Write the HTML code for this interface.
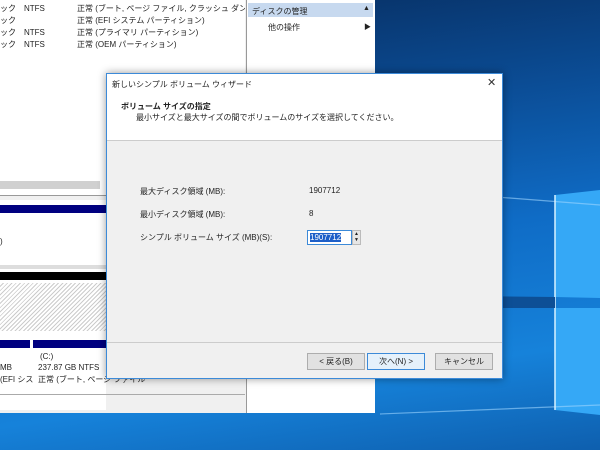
<!DOCTYPE html>
<html><head><meta charset="utf-8"><style>
*{margin:0;padding:0;box-sizing:border-box}
body{width:600px;height:450px;overflow:hidden;position:relative;font-family:"Liberation Sans","Noto Sans CJK JP",sans-serif;font-size:8px;color:#222;background:#0a3f7e}
.a{position:absolute}
.t{position:absolute;white-space:nowrap;font-size:8px}
</style></head><body>
<div class="a" style="left:0;top:0;width:600px;height:450px;background:linear-gradient(172deg,#072a5a 0%,#0b4d96 30%,#0f6cc6 55%,#1682da 80%,#0e5fae 100%)"></div>
<svg class="a" style="left:0;top:0" width="600" height="450">
<polygon points="555,195 600,190 600,298 555,297" fill="#35a8f6"/>
<polygon points="555,308 600,308 600,415 555,410" fill="#35a8f6"/>
<line x1="380" y1="188" x2="600" y2="205" stroke="#9fd6ff" stroke-width="1.2" opacity=".6"/>
<line x1="380" y1="414" x2="600" y2="405" stroke="#9fd6ff" stroke-width="1.2" opacity=".6"/>
<line x1="555" y1="195" x2="555" y2="410" stroke="#d8f2ff" stroke-width="1.5"/>
<polygon points="376,295 555,297 555,308 376,308" fill="#0d4f96"/>
</svg>
<div class="a" style="left:0;top:0;width:375px;height:413px;background:#f0f0f0;border-right:1px solid #888"></div>
<div class="a" style="left:0;top:0;width:245px;height:195px;background:#fff;overflow:hidden">
<div class="t" style="left:0;top:3px">ック　NTFS</div><div class="t" style="left:77px;top:3px">正常 (ブート, ページ ファイル, クラッシュ ダンプ, プライマ</div>
<div class="t" style="left:0;top:15px">ック</div><div class="t" style="left:77px;top:15px">正常 (EFI システム パーティション)</div>
<div class="t" style="left:0;top:27px">ック　NTFS</div><div class="t" style="left:77px;top:27px">正常 (プライマリ パーティション)</div>
<div class="t" style="left:0;top:39px">ック　NTFS</div><div class="t" style="left:77px;top:39px">正常 (OEM パーティション)</div>
<div class="a" style="left:0;top:181px;width:100px;height:8px;background:#d0d0d0"></div>
</div>
<div class="a" style="left:0;top:195px;width:245px;height:1px;background:#999"></div>
<div class="a" style="left:246px;top:0;width:129px;height:413px;background:#fff;border-left:1px solid #999"></div>
<div class="a" style="left:248px;top:3px;width:125px;height:14px;background:#c7d9ef"></div>
<div class="t" style="left:252px;top:6px">ディスクの管理</div><div class="t" style="left:363px;top:5px;font-size:7px">▲</div>
<div class="t" style="left:268px;top:22px">他の操作</div><div class="t" style="left:364px;top:22px;font-size:7px">▶</div>
<div class="a" style="left:0;top:200px;width:106px;height:210px;background:#fff"></div>
<div class="a" style="left:0;top:205px;width:106px;height:8px;background:#000080"></div>
<div class="t" style="left:0;top:237px">)</div>
<div class="a" style="left:0;top:265px;width:106px;height:4px;background:#ddd"></div>
<div class="a" style="left:0;top:272px;width:106px;height:8px;background:#000"></div>
<div class="a" style="left:0;top:283px;width:106px;height:48px;background:repeating-linear-gradient(135deg,#fff 0 2px,#ccc 2px 3px)"></div>
<div class="a" style="left:0;top:340px;width:30px;height:8px;background:#000080"></div>
<div class="a" style="left:33px;top:340px;width:73px;height:8px;background:#000080"></div>
<div class="t" style="left:0;top:363px">MB</div><div class="t" style="left:0;top:374px">(EFI シス</div>
<div class="t" style="left:40px;top:352px">(C:)</div>
<div class="t" style="left:38px;top:363px">237.87 GB NTFS</div>
<div class="t" style="left:38px;top:374px">正常 (ブート, ページ ファイル</div>
<div class="a" style="left:0;top:394px;width:245px;height:1px;background:#aaa"></div>
<div class="a" style="left:106px;top:73px;width:397px;height:306px;background:#f0f0f0;border:1px solid #3c8ad8;box-shadow:0 0 8px rgba(0,0,0,.4)"></div>
<div class="a" style="left:107px;top:74px;width:395px;height:67px;background:#fff;border-bottom:1px solid #ccc"></div>
<div class="t" style="left:112px;top:79px">新しいシンプル ボリューム ウィザード</div>
<div class="t" style="left:487px;top:76px;font-size:11px;color:#333">✕</div>
<div class="t" style="left:121px;top:101px;font-weight:bold">ボリューム サイズの指定</div>
<div class="t" style="left:136px;top:112px">最小サイズと最大サイズの間でボリュームのサイズを選択してください。</div>
<div class="t" style="left:140px;top:186px">最大ディスク領域 (MB):</div>
<div class="t" style="left:309px;top:186px">1907712</div>
<div class="t" style="left:140px;top:209px">最小ディスク領域 (MB):</div>
<div class="t" style="left:309px;top:209px">8</div>
<div class="t" style="left:140px;top:232px">シンプル ボリューム サイズ (MB)(S):</div>
<div class="a" style="left:307px;top:230px;width:45px;height:15px;background:#fff;border:1px solid #3c8ad8"></div>
<div class="t" style="left:310px;top:233px;background:#1e5fc8;color:#fff;line-height:9px">1907712</div>
<div class="a" style="left:352px;top:230px;width:9px;height:15px;background:#e6e6e6;border:1px solid #bbb;font-size:5px;line-height:6px;text-align:center">▲<br>▼</div>
<div class="a" style="left:107px;top:342px;width:395px;height:1px;background:#ccc"></div>
<div class="a" style="left:307px;top:353px;width:58px;height:17px;background:#e1e1e1;border:1px solid #adadad;text-align:center;line-height:15px">&lt; 戻る(B)</div>
<div class="a" style="left:367px;top:353px;width:58px;height:17px;background:#e5f1fb;border:1px solid #3c8ad8;text-align:center;line-height:15px">次へ(N) &gt;</div>
<div class="a" style="left:435px;top:353px;width:58px;height:17px;background:#e1e1e1;border:1px solid #adadad;text-align:center;line-height:15px">キャンセル</div>
</body></html>
